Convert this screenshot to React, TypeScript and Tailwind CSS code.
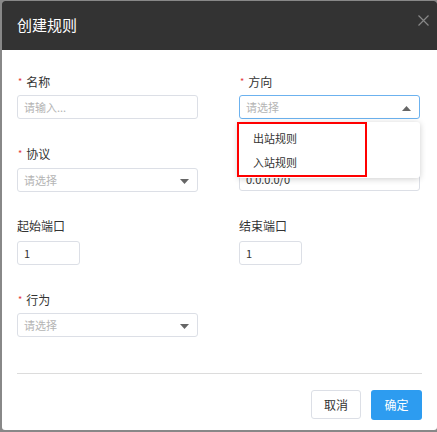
import React from "react";

const font = { fontFamily: '"Noto Sans CJK SC", "Noto Sans", sans-serif' };

function Label({ text, req }: { text: string; req?: boolean }) {
  return (
    <div className="flex items-center h-[16px] text-[12px] text-[#333]">
      {req && <span className="text-[#e4393c] text-[9px] mr-[4px] ml-[1px]">*</span>}
      <span>{text}</span>
    </div>
  );
}

function Caret({ up }: { up?: boolean }) {
  return (
    <svg width="9" height="5" viewBox="0 0 9 5" className="absolute right-[8px] top-[10px]">
      <path d={up ? "M0 5 L4.5 0 L9 5 Z" : "M0 0 L4.5 5 L9 0 Z"} fill="#666" />
    </svg>
  );
}

function Box({ w, text, ph, caret, up, focus }: { w: string; text?: string; ph?: string; caret?: boolean; up?: boolean; focus?: boolean }) {
  return (
    <div className={`relative h-[24px] ${w} rounded-[3px] border ${focus ? "border-[#6cb2ef]" : "border-[#dcdfe6]"} bg-white flex items-center pl-[6px] text-[11px]`}>
      {text ? <span className="text-[#333]">{text}</span> : <span className="text-[#b4b4b4]">{ph}</span>}
      {caret && <Caret up={up} />}
    </div>
  );
}

export default function App() {
  return (
    <div style={font} className="w-[437px] h-[432px] bg-[#888] pl-[2px] pb-[2px] pt-[1px]">
      <div className="w-full h-full bg-white rounded-[3px] overflow-hidden flex flex-col">
        <div className="h-[49px] bg-[#333333] flex items-center justify-between pl-[15px] pr-[8px]">
          <span className="text-white text-[15px]">创建规则</span>
          <svg width="11" height="11" viewBox="0 0 11 11" className="mb-[10px]"><path d="M0.5 0.5 L10.5 10.5 M10.5 0.5 L0.5 10.5" stroke="#888" strokeWidth="1.2" /></svg>
        </div>
        <div className="px-[15px] pt-[24px] relative flex-1 flex flex-col">
          <div className="grid grid-cols-[181px_181px] gap-x-[41px]">
            <div>
              <Label text="名称" req />
              <div className="mt-[5px]"><Box w="w-[181px]" ph="请输入..." /></div>
            </div>
            <div>
              <Label text="方向" req />
              <div className="mt-[5px]"><Box w="w-[181px]" ph="请选择" caret up focus /></div>
            </div>
            <div className="mt-[27px]">
              <Label text="协议" req />
              <div className="mt-[6px]"><Box w="w-[181px]" ph="请选择" caret /></div>
            </div>
            <div className="mt-[48px]">
              <Box w="w-[181px]" text="0.0.0.0/0" />
            </div>
            <div className="mt-[26px]">
              <Label text="起始端口" />
              <div className="mt-[7px]"><Box w="w-[63px]" text="1" /></div>
            </div>
            <div className="mt-[26px]">
              <Label text="结束端口" />
              <div className="mt-[7px]"><Box w="w-[63px]" text="1" /></div>
            </div>
            <div className="mt-[27px]">
              <Label text="行为" req />
              <div className="mt-[5px]"><Box w="w-[181px]" ph="请选择" caret /></div>
            </div>
          </div>
          <div className="mt-[36px] border-t border-[#dcdcdc]" />
          <div className="flex justify-end gap-[10px] mt-[16px]">
            <button className="w-[50px] h-[29px] rounded-[3px] border border-[#dcdfe6] bg-white text-[12px] text-[#333]">取消</button>
            <button className="w-[51px] h-[30px] rounded-[3px] bg-[#2d9cf0] text-[12px] text-white">确定</button>
          </div>
          <div className="absolute left-[236px] top-[72px] w-[182px] h-[56px] bg-white rounded-[3px] shadow-[0_1px_6px_rgba(0,0,0,0.2)] flex flex-col justify-center text-[11px] text-[#333] pl-[15px] gap-[8px]">
            <span>出站规则</span>
            <span>入站规则</span>
            <div className="absolute left-[-1px] top-0 w-[130px] h-[55px] border-2 border-[#ff0000]" />
          </div>
        </div>
      </div>
    </div>
  );
}
